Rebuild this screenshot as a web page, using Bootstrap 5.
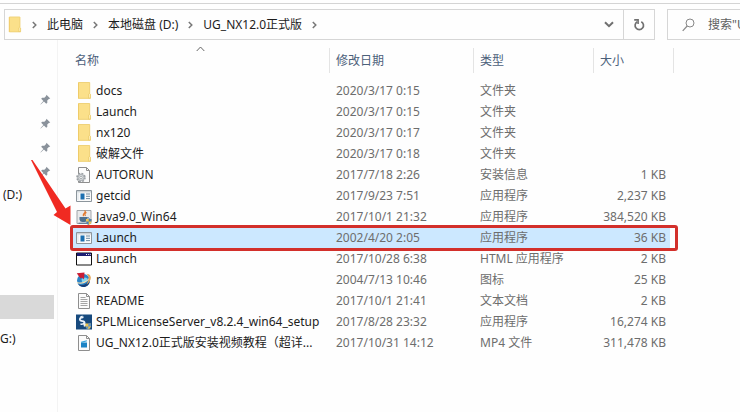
<!DOCTYPE html>
<html lang="zh-CN">
<head>
<meta charset="utf-8">
<meta name="viewport" content="width=device-width, initial-scale=1">
<title>UG_NX12.0正式版</title>
<link href="https://cdn.jsdelivr.net/npm/bootstrap@5.3.0/dist/css/bootstrap.min.css" rel="stylesheet">
<style>
body{font-family:"Noto Sans","Noto Sans CJK SC",sans-serif;font-size:12px;line-height:20px;color:#1c1c1c;background:#fefefe;overflow-x:hidden}
svg{display:block;flex:none}
.ribbon-edge{height:4px;border-bottom:1px solid #d4d4d4}
.toolbar{padding:5px 0 0 4px;gap:12px}
.address{height:31px;border:1px solid #d6d6d6;padding-left:2px;min-width:0}
.address a{color:#1c1c1c;text-decoration:none;white-space:nowrap}
.address ol{gap:10px;min-width:0}
.address button,.search button{border:0;background:none;padding:0}
.address .history{width:28px}
.address .refresh{width:31px;border-left:1px solid #d6d6d6}
.search{width:73px;height:31px;border:1px solid #d6d6d6;border-right:0;padding-left:14px;gap:13px}
.search input{border:0;outline:0;background:none;padding:0;min-width:0;width:100%;color:#606060}
.search input::placeholder{color:#606060;opacity:1}
.side{width:58px;flex:none;border-right:1px solid #f3f3f3;padding-top:47px;color:#1c1c1c}
.side a{height:24px;color:#1c1c1c;text-decoration:none}
.side .pinned{padding-left:40px}
.side .drive{padding-left:3px}
.side .current{background:#d9d9d9;margin:88px 3px 8px 0}
.listing{padding:8px 0 0 15px}
.files{table-layout:fixed;width:601px;border-collapse:separate;border-spacing:0}
.c-name{width:257px}.c-date{width:144px}.c-type{width:120px}.c-size{width:80px}
.files th{font-weight:400;color:#4c607a;padding:0 0 7px;position:relative}
.files th div{height:25px;line-height:25px;border-right:1px solid #e4e4e4;padding-left:6px}
.files th:first-child div{padding-left:2px}
.sort{position:absolute;left:50%;top:-2px;margin-left:-6px}
.files td{height:21px;padding:0 0 0 6px;color:#6d6d6d;white-space:nowrap}
.files td:first-child{padding-left:3px;color:#1c1c1c}
.files td:last-child{text-align:right;padding:0 4px 0 0;border-right:4px solid transparent}
.fname{gap:4px;height:21px}
.picked{position:relative}
.picked td{background:#cce8ff;background-clip:padding-box}
.ring{position:absolute;inset:-2px -4px -3px -3px;border:3px solid #d3302b;border-radius:3px;pointer-events:none}
.pointer{position:absolute;right:100%;bottom:100%;margin:0 2px 3px 0}
</style>
</head>
<body>
<svg width="0" height="0" class="position-absolute" aria-hidden="true">
<defs>
<symbol id="folder" viewBox="0 0 16 17"><path d="M2 .5h12v11.5l.8.8v3.7H2z" fill="#fbe08a"/><path d="M2 .5h1v16H2z" fill="#efcb68"/><path d="M2.500.500h11.200v11M2.500 16.300h12" fill="none" stroke="#efd27a"/><path d="M12.500 16v-3.800l1-.8 1 .8V16z" fill="#fdebb0" stroke="#e9c968" stroke-width=".7"/></symbol>
<symbol id="pin" viewBox="0 0 12 12"><path d="M7 .8 11.200 5l-1.500.400-1.800 1.800.100 2.400-1.200 1L4.300 8.200.800 11.500.500 11.200 3.700 7.600 1.300 5.200l1-1.200 2.500.100 1.800-1.800z" fill="#8a929b"/></symbol>
<symbol id="app" viewBox="0 0 16 16"><path d="M.5 2.500h15v11H.5z" fill="#fafafa" stroke="#8c959c"/><path d="M1 3h14v1.500H1z" fill="#cbd2d7"/><path d="M4.500 5.500h4v6h-4z" fill="#1b6fb0"/><path d="M10 6h4M10 8.300h4M10 10.600h4" stroke="#6d8aa0"/><path d="M2 5v7" stroke="#dbe4ea"/></symbol>
<symbol id="page" viewBox="0 0 16 16"><path d="M2.500.500h8l3 3v12h-11z" fill="#fbfbfb" stroke="#8e8e8e"/><path d="M10.500.500v3h3" fill="none" stroke="#8e8e8e"/></symbol>
<symbol id="crumb" viewBox="0 0 5 8"><path d="m.8 1 3 3-3 3" fill="none" stroke="#777" stroke-width="1.500"/></symbol>
</defs>
</svg>

<div class="d-flex flex-column min-vh-100">
<div class="ribbon-edge"></div>
<header class="toolbar d-flex">
  <nav class="address d-flex align-items-stretch flex-grow-1" aria-label="地址">
    <ol class="d-flex align-items-center list-unstyled mb-0 flex-grow-1">
      <li><svg width="15" height="17"><use href="#folder"/></svg></li>
      <li><svg width="5" height="8"><use href="#crumb"/></svg></li>
      <li><a href="#">此电脑</a></li>
      <li><svg width="5" height="8"><use href="#crumb"/></svg></li>
      <li><a href="#">本地磁盘 (D:)</a></li>
      <li><svg width="5" height="8"><use href="#crumb"/></svg></li>
      <li><a href="#">UG_NX12.0正式版</a></li>
      <li><svg width="5" height="8"><use href="#crumb"/></svg></li>
    </ol>
    <button type="button" class="history d-flex align-items-center justify-content-center" aria-label="历史记录"><svg width="10" height="7" viewBox="0 0 10 7"><path d="m1 1.200 4 4 4-4" fill="none" stroke="#707070" stroke-width="2"/></svg></button>
    <button type="button" class="refresh d-flex align-items-center justify-content-center" aria-label="刷新"><svg width="12" height="13" viewBox="0 0 12 13"><path d="M4.300 3.700A4.200 4.200 0 1 0 8.300 3.700" fill="none" stroke="#707070" stroke-width="1.700"/><path d="M1.200 1.900h3.900v4" fill="none" stroke="#707070" stroke-width="1.600"/></svg></button>
  </nav>
  <form class="search d-flex align-items-center" role="search">
    <svg width="13" height="14" viewBox="0 0 13 14"><circle cx="8" cy="5" r="4" fill="none" stroke="#888"/><path d="M5.200 8 .700 12.800" stroke="#888" stroke-width="1.200"/></svg>
    <input type="text" aria-label="搜索" placeholder="搜索&quot;UG_NX12.0正式版&quot;">
  </form>
</header>

<div class="d-flex flex-grow-1">
  <nav class="side d-flex flex-column" aria-label="导航窗格">
    <a href="#" class="pinned d-flex align-items-center" aria-label="固定项 1"><svg width="11" height="11"><use href="#pin"/></svg></a>
    <a href="#" class="pinned d-flex align-items-center" aria-label="固定项 2"><svg width="11" height="11"><use href="#pin"/></svg></a>
    <a href="#" class="pinned d-flex align-items-center" aria-label="固定项 3"><svg width="11" height="11"><use href="#pin"/></svg></a>
    <a href="#" class="pinned d-flex align-items-center" aria-label="固定项 4"><svg width="11" height="11"><use href="#pin"/></svg></a>
    <a href="#" class="drive d-flex align-items-center">(D:)</a>
    <a href="#" class="current" aria-label="当前位置"></a>
    <a href="#" class="d-flex align-items-center">G:)</a>
  </nav>
  <main class="listing flex-grow-1">
    <table class="files">
      <colgroup><col class="c-name"><col class="c-date"><col class="c-type"><col class="c-size"></colgroup>
      <thead><tr>
        <th scope="col"><div>名称</div><svg class="sort" width="9" height="6" viewBox="0 0 9 6"><path d="m.700 5 3.800-4 3.800 4" fill="none" stroke="#666"/></svg></th>
        <th scope="col"><div>修改日期</div></th><th scope="col"><div>类型</div></th><th scope="col"><div>大小</div></th>
      </tr></thead>
      <tbody>
        <tr><td><div class="fname d-flex align-items-center"><svg width="16" height="17"><use href="#folder"/></svg><span>docs</span></div></td><td>2020/3/17 0:15</td><td>文件夹</td><td></td></tr>
        <tr><td><div class="fname d-flex align-items-center"><svg width="16" height="17"><use href="#folder"/></svg><span>Launch</span></div></td><td>2020/3/17 0:15</td><td>文件夹</td><td></td></tr>
        <tr><td><div class="fname d-flex align-items-center"><svg width="16" height="17"><use href="#folder"/></svg><span>nx120</span></div></td><td>2020/3/17 0:17</td><td>文件夹</td><td></td></tr>
        <tr><td><div class="fname d-flex align-items-center"><svg width="16" height="17"><use href="#folder"/></svg><span>破解文件</span></div></td><td>2020/3/17 0:18</td><td>文件夹</td><td></td></tr>
        <tr><td><div class="fname d-flex align-items-center"><svg width="16" height="16" viewBox="0 0 16 16"><use href="#page"/><circle cx="5" cy="10.500" r="4" fill="#d4d7d9" stroke="#9a9fa3" stroke-width="1.600" stroke-dasharray="1.800 1.340"/><circle cx="5" cy="10.500" r="3" fill="#d9dcde" stroke="#9fa4a8" stroke-width=".8"/><circle cx="5" cy="10.500" r="1.200" fill="#fff" stroke="#8d9397" stroke-width=".7"/></svg><span>AUTORUN</span></div></td><td>2017/7/18 2:26</td><td>安装信息</td><td>1 KB</td></tr>
        <tr><td><div class="fname d-flex align-items-center"><svg width="16" height="16"><use href="#app"/></svg><span>getcid</span></div></td><td>2017/9/23 7:51</td><td>应用程序</td><td>2,237 KB</td></tr>
        <tr><td><div class="fname d-flex align-items-center"><svg width="16" height="16" viewBox="0 0 16 16"><path d="M1 1.500h14v13H1z" fill="#e9eaeb" stroke="#a1a6aa"/><path d="M8.500 1.500c3 2-3 3-.8 5.500M10.500 3.500c-2 1-2 2-1 3.500" fill="none" stroke="#e27a2e" stroke-width="1.200"/><path d="M3.500 8h8v2.500a3 3 0 0 1-3 2.500h-2a3 3 0 0 1-3-2.500z" fill="#4d7290"/><path d="M11.500 8.500c2.500 0 2 2.500-.5 2.500M2.500 14.200h9" fill="none" stroke="#4d7290"/><path d="M10 10h5.500v2.500q-.5 2.500-2.700 3.500Q10.500 15 10 12.500z" fill="#f1c64d"/><path d="M12.700 10h2.800v2.500h-2.800zM10 12.500h2.700V16Q10.400 15 10 12.500z" fill="#4d82ba"/></svg><span>Java9.0_Win64</span></div></td><td>2017/10/1 21:32</td><td>应用程序</td><td>384,520 KB</td></tr>
        <tr class="picked"><td><div class="fname d-flex align-items-center"><svg width="16" height="16"><use href="#app"/></svg><span>Launch</span></div>
          <div class="ring"><svg class="pointer" width="40" height="65" viewBox="0 0 40 65"><path d="M0 0h1.500L34.500 48.500 39.500 45.500V65L22.500 55 26 52z" fill="#f02a22"/></svg></div></td><td>2002/4/20 2:05</td><td>应用程序</td><td>36 KB</td></tr>
        <tr><td><div class="fname d-flex align-items-center"><svg width="16" height="16" viewBox="0 0 16 16"><path d="M.5 2h15v12H.5z" fill="#fff" stroke="#111"/><path d="M1 2h14v3H1z" fill="#1c1d72"/><path d="M10 3.500h1m1 0h.8m1 0h.8" stroke="#fff"/></svg><span>Launch</span></div></td><td>2017/10/28 6:38</td><td>HTML 应用程序</td><td>2 KB</td></tr>
        <tr><td><div class="fname d-flex align-items-center"><svg width="16" height="16" viewBox="0 0 16 16"><circle cx="7.500" cy="8.500" r="6.500" fill="#2a83c6"/><path d="M2 12c3 2 8 1 11.500-3 .5 5-7 9-11.500 3z" fill="#173f78"/><path d="M5.500 7q4-3 6.500 0-2 4-6 3z" fill="#83d4ef"/><path d="M1 10.500c5 2 11-1 13.500-5.500" fill="none" stroke="#f4dfb4" stroke-width="1.300"/><path d="M10.500 1.800c3.500 0 5 3 4 5.700s-2.500 4-4 5c2.500-4 3.500-7 0-10.700z" fill="#e5a65c"/><path d="M.800 1.200 8.500.500 8 7.500 6 5.500 4.800 6.500 3.200 4.800z" fill="#c91c34"/></svg><span>nx</span></div></td><td>2004/7/13 10:46</td><td>图标</td><td>25 KB</td></tr>
        <tr><td><div class="fname d-flex align-items-center"><svg width="16" height="16" viewBox="0 0 16 16"><use href="#page"/><path d="M4.500 4.500h5m-5 2h7m-7 2h7m-7 2h7m-7 2h7" stroke="#a5a5a5"/></svg><span>README</span></div></td><td>2017/10/1 21:41</td><td>文本文档</td><td>2 KB</td></tr>
        <tr><td><div class="fname d-flex align-items-center"><svg width="16" height="16" viewBox="0 0 16 16"><path d="M0 .500h16v15H0z" fill="#174a7e"/><path d="M7.500 3.200C2.500 3.500 3 7 6.500 7.200S9 10.500 4.500 10.200" fill="none" stroke="#edf4fa" stroke-width="1.700"/><path d="M4 2.500 6.500 1.500 6.200 4.500zM7 8.500l4.500 1.800L8 13z" fill="#edf4fa"/><path d="M9.500 9.500H15v3q-.5 2-2.700 3Q10 14.500 9.500 12.500z" fill="#edc34e"/><path d="M12.300 9.500H15v3h-2.700zM9.500 12.500h2.800v3q-2.400-1-2.800-3z" fill="#5f94c4"/></svg><span>SPLMLicenseServer_v8.2.4_win64_setup</span></div></td><td>2017/8/28 23:32</td><td>应用程序</td><td>16,274 KB</td></tr>
        <tr><td><div class="fname d-flex align-items-center"><svg width="16" height="16" viewBox="0 0 16 16"><use href="#page"/><path d="M5 7.500h6v5H5z" fill="#1b83c5"/><path d="m5 6.800 5.700-1.600.3 1.100L5.500 8z" fill="#36a5dd"/></svg><span>UG_NX12.0正式版安装视频教程（超详...</span></div></td><td>2017/10/31 14:12</td><td>MP4 文件</td><td>311,478 KB</td></tr>
      </tbody>
    </table>
  </main>
</div>
</div>
<script src="https://cdn.jsdelivr.net/npm/bootstrap@5.3.0/dist/js/bootstrap.bundle.min.js"></script>
</body>
</html>
